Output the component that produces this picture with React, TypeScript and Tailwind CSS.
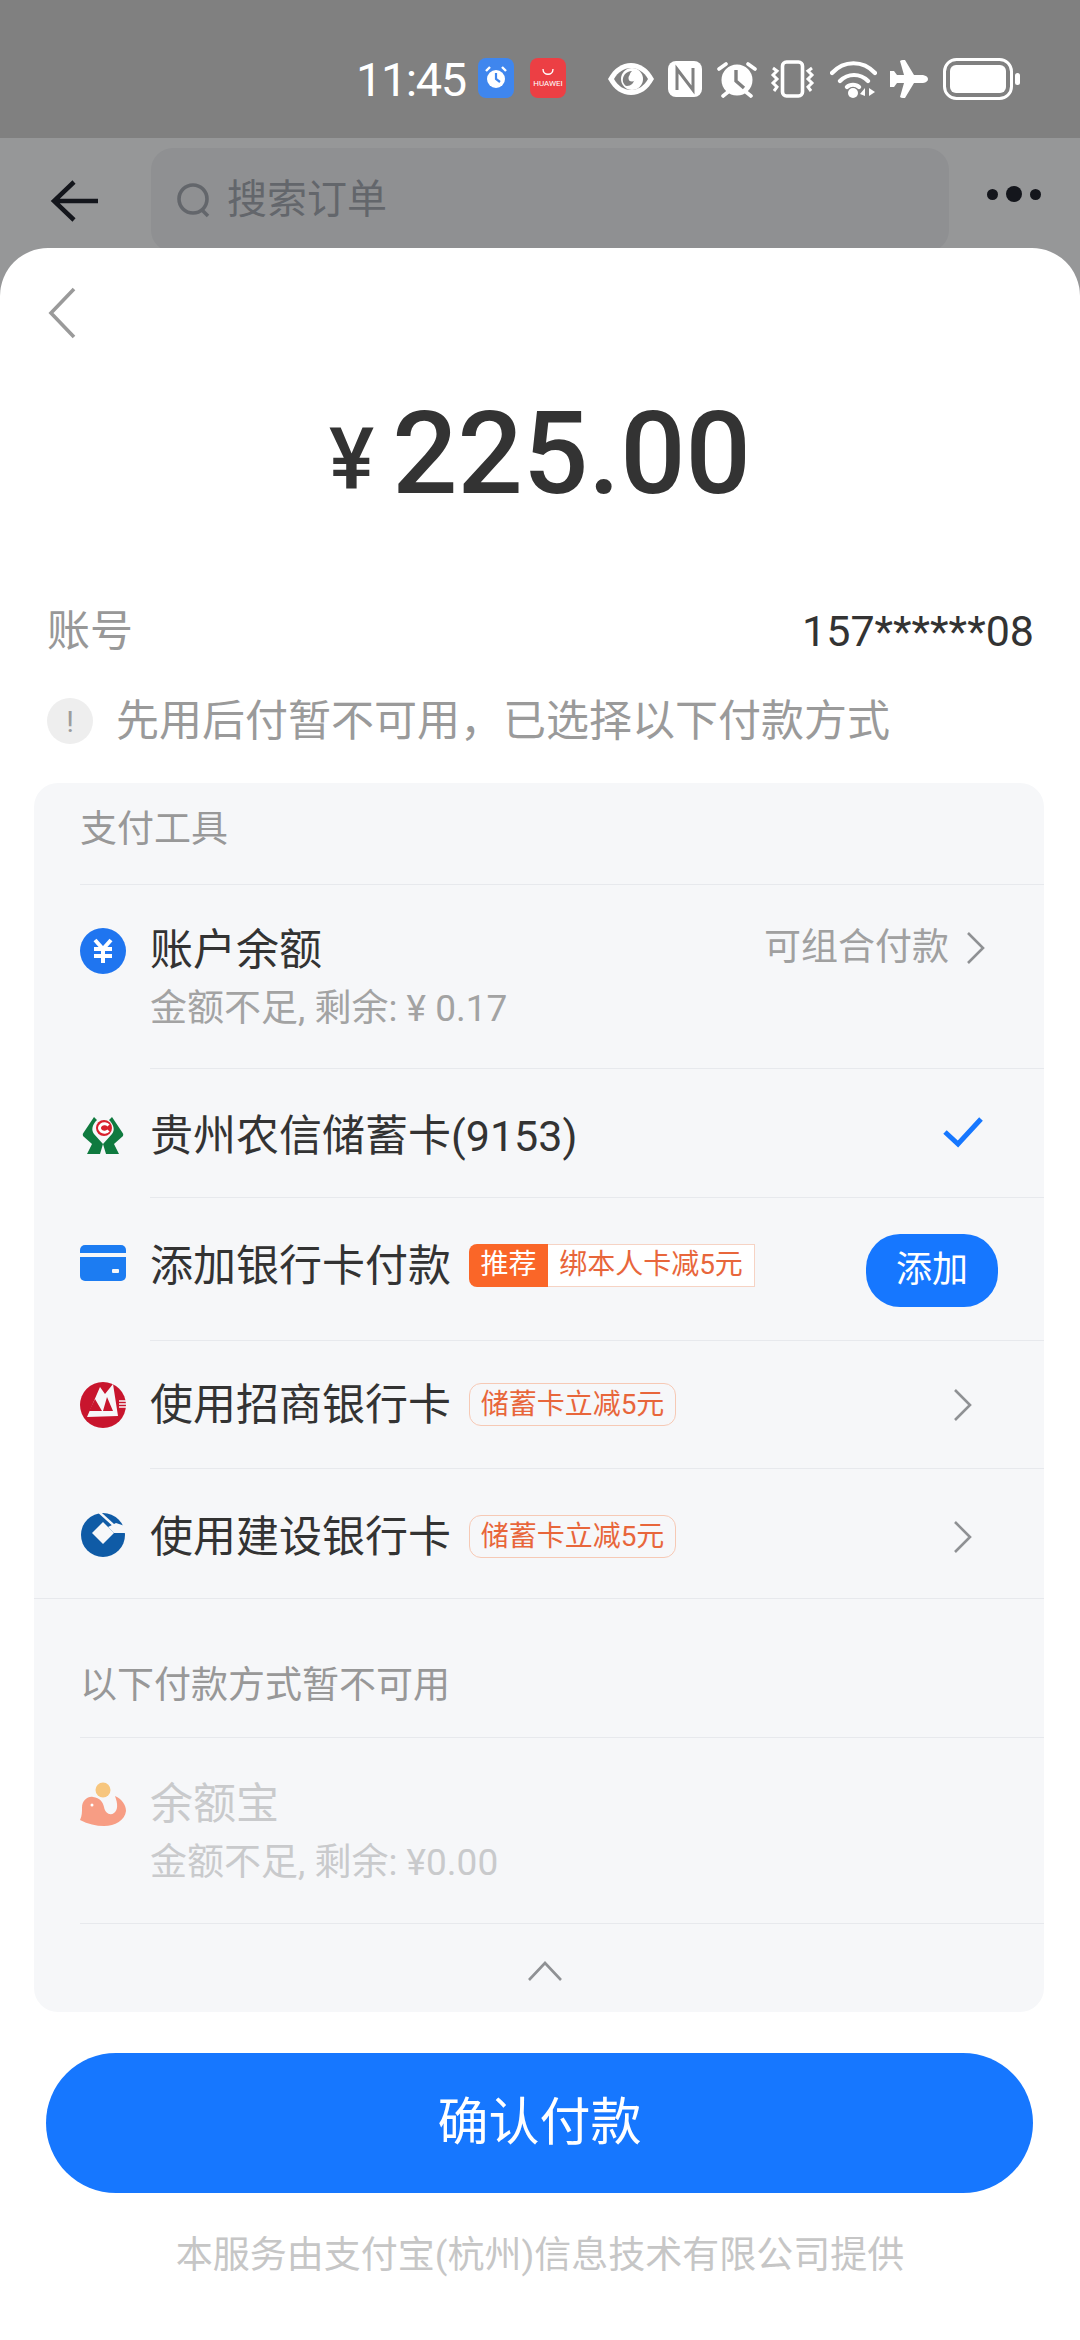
import React from "react";

const FONT = { cjk: "font-['Roboto','Noto_Sans_CJK_SC',sans-serif]" };

const Chevron = ({ className }: { className?: string }) => (
  <svg width="24" height="36" viewBox="0 0 24 36" fill="none" className={className}>
    <path d="M4 3l15 15L4 33" stroke="#8f9194" strokeWidth="2.6" />
  </svg>
);

const StatusIcons = () => (
  <div className="flex items-center">
    <svg width="48" height="40" viewBox="0 0 48 40" className="ml-[92px]">
      <path d="M1 20C7 9 15 4 24 4s17 5 23 16c-6 11-14 16-23 16S7 31 1 20z" fill="#fff" />
      <path d="M7 20c4-7 10-11 17-11s13 4 17 11c-4 7-10 11-17 11S11 27 7 20z" fill="#808080" />
      <circle cx="25" cy="20" r="11" fill="#fff" />
      <path d="M16 23c-1-6 3-11 9-11-2 2-3 4-2 6s3 2 5 1c-1 5-4 8-8 8-2 0-3-2-4-4z" fill="#808080" />
      <circle cx="25" cy="19" r="3.5" fill="#fff" />
    </svg>
    <svg width="35" height="40" viewBox="0 0 35 40" className="ml-[13px]">
      <rect x="0" y="2" width="34" height="36" rx="8" fill="#fff" />
      <path d="M9 31V10l16 21V9" stroke="#808080" strokeWidth="3" fill="none" />
    </svg>
    <svg width="40" height="40" viewBox="0 0 40 40" className="ml-[14px]">
      <circle cx="20" cy="21" r="15.5" fill="#fff" />
      <path d="M19 11v11l8 7" stroke="#808080" strokeWidth="3.4" fill="none" />
      <path d="M2 10l7-5M38 10l-7-5M6 37l5-4M34 37l-5-4" stroke="#fff" strokeWidth="3.6" strokeLinecap="round" />
    </svg>
    <svg width="45" height="40" viewBox="0 0 45 40" className="ml-[13px]">
      <rect x="12.5" y="3" width="20" height="34" rx="4" fill="none" stroke="#fff" strokeWidth="3.6" />
      <path d="M3 9l4 3-4 4 4 4-4 4 4 4-3 4M42 9l-4 3 4 4-4 4 4 4-4 4 3 4" stroke="#fff" strokeWidth="3" fill="none" />
    </svg>
    <svg width="47" height="40" viewBox="0 0 47 40" className="ml-[15px]">
      <path d="M2 14c12-13 31-13 43 0M10 22c8-8 20-8 28 0M17 28c3-3 9-3 12 0" stroke="#fff" strokeWidth="4.2" fill="none" strokeLinecap="round" />
      <circle cx="23" cy="34" r="5" fill="#fff" />
      <path d="M35 29v8l-5-2zM39 29v8l6-4z" fill="#fff" />
    </svg>
    <svg width="38" height="40" viewBox="0 0 38 40" className="ml-[13px]">
      <path d="M0 12l4 0 3 4 7 0L10 2q1-1 3-1l2 0 9 15 9 0q5 1 5 4t-5 4l-9 0-9 15-2 0q-2 0-3-1l4-14-7 0-3 4-4 0z" fill="#fff" />
    </svg>
    <svg width="77" height="42" viewBox="0 0 77 42" className="ml-[15px]">
      <rect x="1.5" y="1.5" width="67" height="39" rx="12" fill="none" stroke="#fff" strokeWidth="3" />
      <rect x="7" y="7" width="56" height="28" rx="6" fill="#fff" />
      <rect x="72" y="15" width="5" height="12" rx="2.5" fill="#fff" />
    </svg>
  </div>
);

const AbcLogo = () => (
  <svg width="42" height="38" viewBox="0 0 42 38">
    <path d="M12 1l3 3C10 9 9 14 12 18l9 10-3 10H5l5-10-9-8Q0 18 2 16z" fill="#0f7a3f" />
    <path d="M30 1l-3 3c5 5 6 10 3 14l-9 10 3 10h13l-5-10 9-8q1-2-1-4z" fill="#0f7a3f" />
    <circle cx="22" cy="12" r="8" fill="#d8202c" />
    <path d="M26.500 9.500a5 4.200 0 1 0 0 5" stroke="#fff" strokeWidth="3" fill="none" />
  </svg>
);

const CmbLogo = () => (
  <svg width="46" height="46" viewBox="0 0 46 46">
    <circle cx="23" cy="23" r="23" fill="#c8152d" />
    <path d="M7 35L20 5l5 7 8-10 5 32z" fill="#f6f7f9" />
    <path d="M9 29l6-12 7 12zM23 29l4-14 6 14z" fill="#c8152d" />
    <path d="M39 19h7M39 22h7M39 25h7" stroke="#f6f7f9" strokeWidth="1.400" />
  </svg>
);

const CcbLogo = () => (
  <svg width="44" height="46" viewBox="0 0 44 46">
    <circle cx="22" cy="24" r="22" fill="#0f5ba6" />
    <path d="M22 11l11 11-11 11-11-11z" fill="#f6f7f9" />
    <path d="M27 16l6 6h11v-7l-9-3z" fill="#f6f7f9" />
    <path d="M17 0l23 21" stroke="#f6f7f9" strokeWidth="2.400" />
  </svg>
);

const YebLogo = () => (
  <svg width="46" height="46" viewBox="0 0 46 46">
    <circle cx="23" cy="8" r="7.500" fill="#f7c67e" />
    <path d="M0 38c2-4 2-8 2-12 0-8 6-12 11-11 7 1 10 5 11 10 1 6 6 9 10 6 4-3 4-9 1-17 7 3 11 9 11 15-1 9-11 15-22 15-8 0-16-2-24-6z" fill="#f79d84" />
    <circle cx="12" cy="23" r="1.500" fill="#fff" />
  </svg>
);

const Row = ({
  height,
  icon,
  title,
  sub,
  right,
  tag,
  inset = "ml-[116px]",
  shift = "",
  disabled,
}: {
  height: string;
  icon: React.ReactNode;
  title: string;
  sub?: string;
  right?: React.ReactNode;
  tag?: React.ReactNode;
  inset?: string;
  shift?: string;
  disabled?: boolean;
}) => (
  <div className={`${inset} relative border-b border-[#e7e9ed] ${height}`}>
    <div className={`flex h-full items-center pr-[59px] ${shift}`}>
      <div className="min-w-0 flex-1">
        <div className="flex items-center">
          <span className={`text-[43px] leading-[56px] ${disabled ? "text-[#c9cacc]" : "text-[#333]"}`}>{title}</span>
          {tag}
        </div>
        {sub && (
          <div className={`mt-[8px] text-[37px] leading-[46px] ${disabled ? "text-[#c9cacc]" : "text-[#a3a3a3]"}`}>{sub}</div>
        )}
      </div>
      {right}
    </div>
    {icon}
  </div>
);

const IconSlot = ({ className, children }: { className: string; children: React.ReactNode }) => (
  <div className={`absolute left-[-70px] flex w-[46px] justify-center ${className}`}>{children}</div>
);

const PromoTag = () => (
  <span className="ml-[18px] flex h-[43px] w-[207px] items-center justify-center rounded-[12px] border border-[#f6c9b5] text-[28px] text-[#e8663b]">
    储蓄卡立减5元
  </span>
);

export default function App() {
  return (
    <div className={`flex h-[2340px] w-[1080px] flex-col overflow-hidden bg-[#969798] ${FONT.cjk}`}>
      <div className="flex h-[138px] shrink-0 items-start bg-[#808080] pt-[58px] pl-[356px]">
        <span className="w-[110px] text-[47px] leading-[44px] tracking-[-1.500px] text-white">11:45</span>
        <div className="ml-[12px] flex h-[40px] w-[36px] items-center justify-center rounded-[8px] bg-[#3f86ee]">
          <svg width="22" height="26" viewBox="0 0 22 26">
            <circle cx="11" cy="14" r="9" fill="#fff" />
            <path d="M11 8v6l4 3" stroke="#3f86ee" strokeWidth="2.2" fill="none" />
            <path d="M1 6l4-4M21 6l-4-4" stroke="#fff" strokeWidth="2.4" />
          </svg>
        </div>
        <div className="ml-[16px] flex h-[40px] w-[36px] flex-col items-center justify-center rounded-[8px] bg-[#ec3f44]">
          <svg width="14" height="8" viewBox="0 0 14 8">
            <path d="M2 1c0 7 10 7 10 0" stroke="#fff" strokeWidth="1.4" fill="none" />
          </svg>
          <span className="mt-[3px] text-[8px] leading-[9px] text-white">HUAWEI</span>
        </div>
        <div className="-ml-[51px]">
          <StatusIcons />
        </div>
      </div>

      <div className="flex h-[111px] shrink-0 items-start bg-[#969798] pt-[10px]">
        <svg width="50" height="42" viewBox="0 0 50 42" className="ml-[50px] mt-[32px]">
          <path d="M24 2L4 21l20 19M5 21h43" stroke="#14161c" strokeWidth="4.500" fill="none" />
        </svg>
        <div className="ml-[51px] flex h-[104px] w-[798px] items-center rounded-[22px] bg-[#8f9092] pl-[25px]">
          <svg width="36" height="40" viewBox="0 0 36 40">
            <circle cx="17" cy="19" r="14" fill="none" stroke="#63666b" strokeWidth="3.600" />
            <path d="M26 30l6 6" stroke="#63666b" strokeWidth="3.600" />
          </svg>
          <span className="ml-[15px] text-[40px] text-[#63666b]">搜索订单</span>
        </div>
        <div className="ml-[38px] mt-[38px] flex items-center gap-[8px]">
          <span className="h-[11px] w-[11px] rounded-full bg-[#14161c]" />
          <span className="h-[16px] w-[16px] rounded-full bg-[#14161c]" />
          <span className="h-[11px] w-[11px] rounded-full bg-[#14161c]" />
        </div>
      </div>

      <div className="relative z-10 -mt-[1px] flex flex-1 flex-col rounded-t-[48px] bg-white px-[34px]">
        <svg width="32" height="52" viewBox="0 0 32 52" className="ml-[12px] mt-[39px]">
          <path d="M28 2L5 26l23 24" stroke="#9a9a9a" strokeWidth="3.600" fill="none" />
        </svg>
        <div className="mt-[54px] flex h-[120px] items-center justify-center text-[#333]">
          <span className="mr-[18px] mt-[14px] text-[85px] font-medium leading-none">¥</span>
          <span className="text-[115px] font-medium leading-none">225.00</span>
        </div>
        <div className="mt-[90px] flex items-center justify-between pl-[13px]">
          <span className="text-[43px] leading-[56px] text-[#989898]">账号</span>
          <span className="mr-[12px] text-[43px] leading-[56px] text-[#333]">157******08</span>
        </div>
        <div className="mt-[32px] flex items-center pl-[13px]">
          <span className="flex h-[46px] w-[46px] items-center justify-center rounded-full bg-[#eeeeee] text-[30px] text-[#9c9c9c]">!</span>
          <span className="ml-[23px] text-[43px] leading-[60px] text-[#9a9a9a]">先用后付暂不可用，已选择以下付款方式</span>
        </div>

        <div className="mt-[32px] h-[1229px] w-[1010px] rounded-[24px] bg-[#f6f7f9]">
          <div className="ml-[46px] flex h-[102px] items-center border-b border-[#e7e9ed] pb-[8px] text-[37px] text-[#989898]">
            支付工具
          </div>
          <Row
            height="h-[184px]"
            title="账户余额"
            sub="金额不足, 剩余: ¥ 0.17"
            icon={
              <IconSlot className="top-[43px]">
                <div className="flex h-[46px] w-[46px] items-center justify-center rounded-full bg-[#1f75f0]">
                  <svg width="22" height="26" viewBox="0 0 22 26">
                    <path d="M3 2l8 9 8-9M2 11h18M2 18h18M11 10v15" stroke="#fff" strokeWidth="4" fill="none" />
                  </svg>
                </div>
              </IconSlot>
            }
            right={
              <div className="mb-[58px] mr-[-3px] flex items-center">
                <span className="mr-[15px] text-[37px] text-[#a0a0a0]">可组合付款</span>
                <Chevron />
              </div>
            }
          />
          <Row
            height="h-[129px]"
            title="贵州农信储蓄卡(9153)"
            shift="pt-[6px]"
            icon={
              <IconSlot className="top-[47px]">
                <AbcLogo />
              </IconSlot>
            }
            right={
              <svg width="42" height="32" viewBox="0 0 42 32" className="mr-[1px] mb-[8px]">
                <path d="M3 16l13 12L39 3" stroke="#1677ff" strokeWidth="5" fill="none" />
              </svg>
            }
          />
          <Row
            height="h-[143px]"
            title="添加银行卡付款"
            shift="pb-[6px]"
            tag={
              <div className="ml-[18px] mt-[-2px] flex h-[43px]">
                <span className="flex w-[79px] items-center justify-center rounded-l-[8px] bg-[#fa6628] text-[28px] text-white">推荐</span>
                <span className="flex w-[207px] items-center justify-center border border-l-0 border-[#f6d3c4] bg-white text-[28px] text-[#e8663b]">绑本人卡减5元</span>
              </div>
            }
            icon={
              <IconSlot className="top-[47px]">
                <svg width="46" height="36" viewBox="0 0 46 36">
                  <rect width="46" height="36" rx="5" fill="#1c7cf2" />
                  <rect y="8" width="46" height="4" fill="#f6f7f9" />
                  <rect x="32" y="24" width="7" height="4" rx="1" fill="#f6f7f9" />
                </svg>
              </IconSlot>
            }
            right={
              <button className="mr-[-13px] mt-[8px] h-[73px] w-[132px] rounded-[34px] bg-[#1677ff] text-[36px] text-white">添加</button>
            }
          />
          <Row
            height="h-[128px]"
            title="使用招商银行卡"
            tag={<PromoTag />}
            icon={
              <IconSlot className="top-[41px]">
                <CmbLogo />
              </IconSlot>
            }
            right={<Chevron className="mr-[10px]" />}
          />
          <Row
            height="h-[130px]"
            title="使用建设银行卡"
            shift="pt-[6px]"
            tag={<PromoTag />}
            inset="pl-[116px]"
            icon={
              <div className="absolute left-[46px] top-[42px] flex w-[46px] justify-center">
                <CcbLogo />
              </div>
            }
            right={<Chevron className="mr-[10px]" />}
          />
          <div className="ml-[46px] flex h-[139px] items-end border-b border-[#e7e9ed] pb-[26px] text-[37px] leading-[50px] text-[#989898]">
            以下付款方式暂不可用
          </div>
          <Row
            height="h-[186px]"
            inset="ml-[46px] pl-[70px]"
            title="余额宝"
            sub="金额不足, 剩余: ¥0.00"
            disabled
            icon={
              <div className="absolute left-0 top-[44px]">
                <YebLogo />
              </div>
            }
          />
          <div className="flex h-[88px] items-start justify-center pt-[36px] pl-[12px]">
            <svg width="36" height="22" viewBox="0 0 36 22">
              <path d="M2 20L18 3l16 17" stroke="#8f9194" strokeWidth="2.600" fill="none" />
            </svg>
          </div>
        </div>

        <button className="ml-[12px] mt-[41px] h-[140px] w-[987px] shrink-0 rounded-[70px] bg-[#1677ff] text-[51px] text-white">
          确认付款
        </button>
        <div className="mt-[39px] text-center text-[37px] leading-[48px] text-[#c6c6c6]">
          本服务由支付宝(杭州)信息技术有限公司提供
        </div>
      </div>
    </div>
  );
}
